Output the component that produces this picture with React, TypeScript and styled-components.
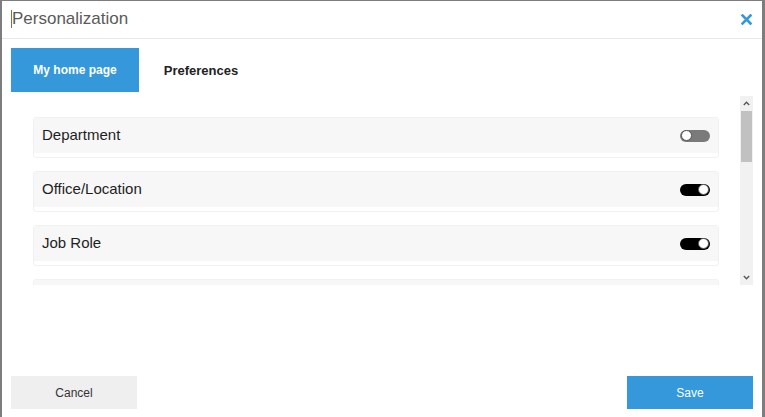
import React from "react";
import styled, { createGlobalStyle } from "styled-components";

const Global = createGlobalStyle`
  html, body { margin: 0; padding: 0; }
  body {
    background: #7d7d7d;
    font-family: "Liberation Sans", Arial, sans-serif;
    overflow: hidden;
  }
`;

const Modal = styled.div`
  margin: 1px 3px 0 2px;
  height: 416px;
  background: #fff;
  display: flex;
  flex-direction: column;
  box-sizing: border-box;
`;

const Header = styled.div`
  height: 37px;
  border-bottom: 1px solid #e8e8e8;
  display: flex;
  align-items: center;
  justify-content: space-between;
  padding: 0 10px 0 9px;
`;

const Title = styled.div`
  font-size: 17px;
  color: #5a5a5a;
  display: flex;
  align-items: center;
  margin-top: -1px;
`;

const Caret = styled.span`
  display: inline-block;
  width: 1px;
  height: 18px;
  background: #8a6a50;
`;

const Close = styled.button`
  border: 0;
  background: none;
  padding: 0;
  width: 11px;
  height: 11px;
  display: flex;
  cursor: pointer;
`;

const Tabs = styled.div`
  display: flex;
  margin-top: 9px;
  padding-left: 9px;
`;

const Tab = styled.div<{ $active?: boolean }>`
  width: ${(p) => (p.$active ? 128 : 124)}px;
  height: 44px;
  display: flex;
  align-items: center;
  justify-content: center;
  font-size: ${(p) => (p.$active ? 12 : 13)}px;
  font-weight: bold;
  background: ${(p) => (p.$active ? "#3498db" : "transparent")};
  color: ${(p) => (p.$active ? "#fff" : "#222")};
`;

const ScrollArea = styled.div`
  margin: 4px 9px 0 20px;
  height: 189px;
  display: flex;
  overflow: hidden;
`;

const List = styled.div`
  flex: 1;
  padding: 21px 21px 0 11px;
  display: flex;
  flex-direction: column;
  gap: 13px;
`;

const Row = styled.div`
  flex: none;
  border: 1px solid #f1f1f1;
  border-radius: 3px;
  padding-bottom: 4px;
  background: #fff;
`;

const RowHead = styled.div`
  height: 35px;
  background: #f7f7f7;
  display: flex;
  align-items: center;
  justify-content: space-between;
  padding: 0 8px;
  font-size: 15px;
  color: #1e1e1e;
`;

const Label = styled.span`
  margin-top: -2px;
`;

const Track = styled.div<{ $on: boolean }>`
  width: 30px;
  height: 12px;
  border-radius: 6px;
  background: ${(p) => (p.$on ? "#000" : "#7a7a7a")};
  display: flex;
  align-items: center;
  justify-content: ${(p) => (p.$on ? "flex-end" : "flex-start")};
  padding: 0 1px;
  box-sizing: border-box;
`;

const Knob = styled.div`
  width: 11px;
  height: 11px;
  border-radius: 50%;
  background: #fff;
  box-sizing: border-box;
  border: 1px solid #555;
`;

const ScrollBar = styled.div`
  width: 13px;
  background: #f1f1f1;
  display: flex;
  flex-direction: column;
`;

const Arrow = styled.div`
  height: 15px;
  display: flex;
  align-items: center;
  justify-content: center;
`;

const Thumb = styled.div`
  height: 51px;
  background: #c1c1c1;
  margin: 0 1px;
`;

const Spacer = styled.div`
  flex: 1;
`;

const Footer = styled.div`
  margin-top: auto;
  padding: 0 9px 8px 9px;
  display: flex;
  justify-content: space-between;
`;

const Button = styled.button<{ $primary?: boolean }>`
  width: 126px;
  height: 33px;
  border: 0;
  font-family: "Liberation Sans", Arial, sans-serif;
  font-size: 12px;
  background: ${(p) => (p.$primary ? "#3498db" : "#efefef")};
  color: ${(p) => (p.$primary ? "#fff" : "#333")};
  cursor: pointer;
`;

const items = [
  { label: "Department", on: false },
  { label: "Office/Location", on: true },
  { label: "Job Role", on: true },
  { label: "", on: false },
];

export default function App() {
  return (
    <>
      <Global />
      <Modal>
        <Header>
          <Title>
            <Caret />
            Personalization
          </Title>
          <Close aria-label="Close">
            <svg width="11" height="11" viewBox="0 0 11 11">
              <path d="M1.5 1.5 L9.5 9.5 M9.5 1.5 L1.5 9.5" stroke="#3498db" strokeWidth="2.6" strokeLinecap="square" />
            </svg>
          </Close>
        </Header>
        <Tabs>
          <Tab $active>My home page</Tab>
          <Tab>Preferences</Tab>
        </Tabs>
        <ScrollArea>
          <List>
            {items.map((it, i) => (
              <Row key={i}>
                <RowHead>
                  <Label>{it.label}</Label>
                  <Track $on={it.on}>
                    <Knob />
                  </Track>
                </RowHead>
              </Row>
            ))}
          </List>
          <ScrollBar>
            <Arrow>
              <svg width="7" height="5" viewBox="0 0 7 5">
                <path d="M0.8 4 L3.5 1.2 L6.2 4" fill="none" stroke="#555" strokeWidth="1.3" />
              </svg>
            </Arrow>
            <Thumb />
            <Spacer />
            <Arrow>
              <svg width="7" height="5" viewBox="0 0 7 5">
                <path d="M0.8 1 L3.5 3.8 L6.2 1" fill="none" stroke="#555" strokeWidth="1.3" />
              </svg>
            </Arrow>
          </ScrollBar>
        </ScrollArea>
        <Footer>
          <Button>Cancel</Button>
          <Button $primary>Save</Button>
        </Footer>
      </Modal>
    </>
  );
}
